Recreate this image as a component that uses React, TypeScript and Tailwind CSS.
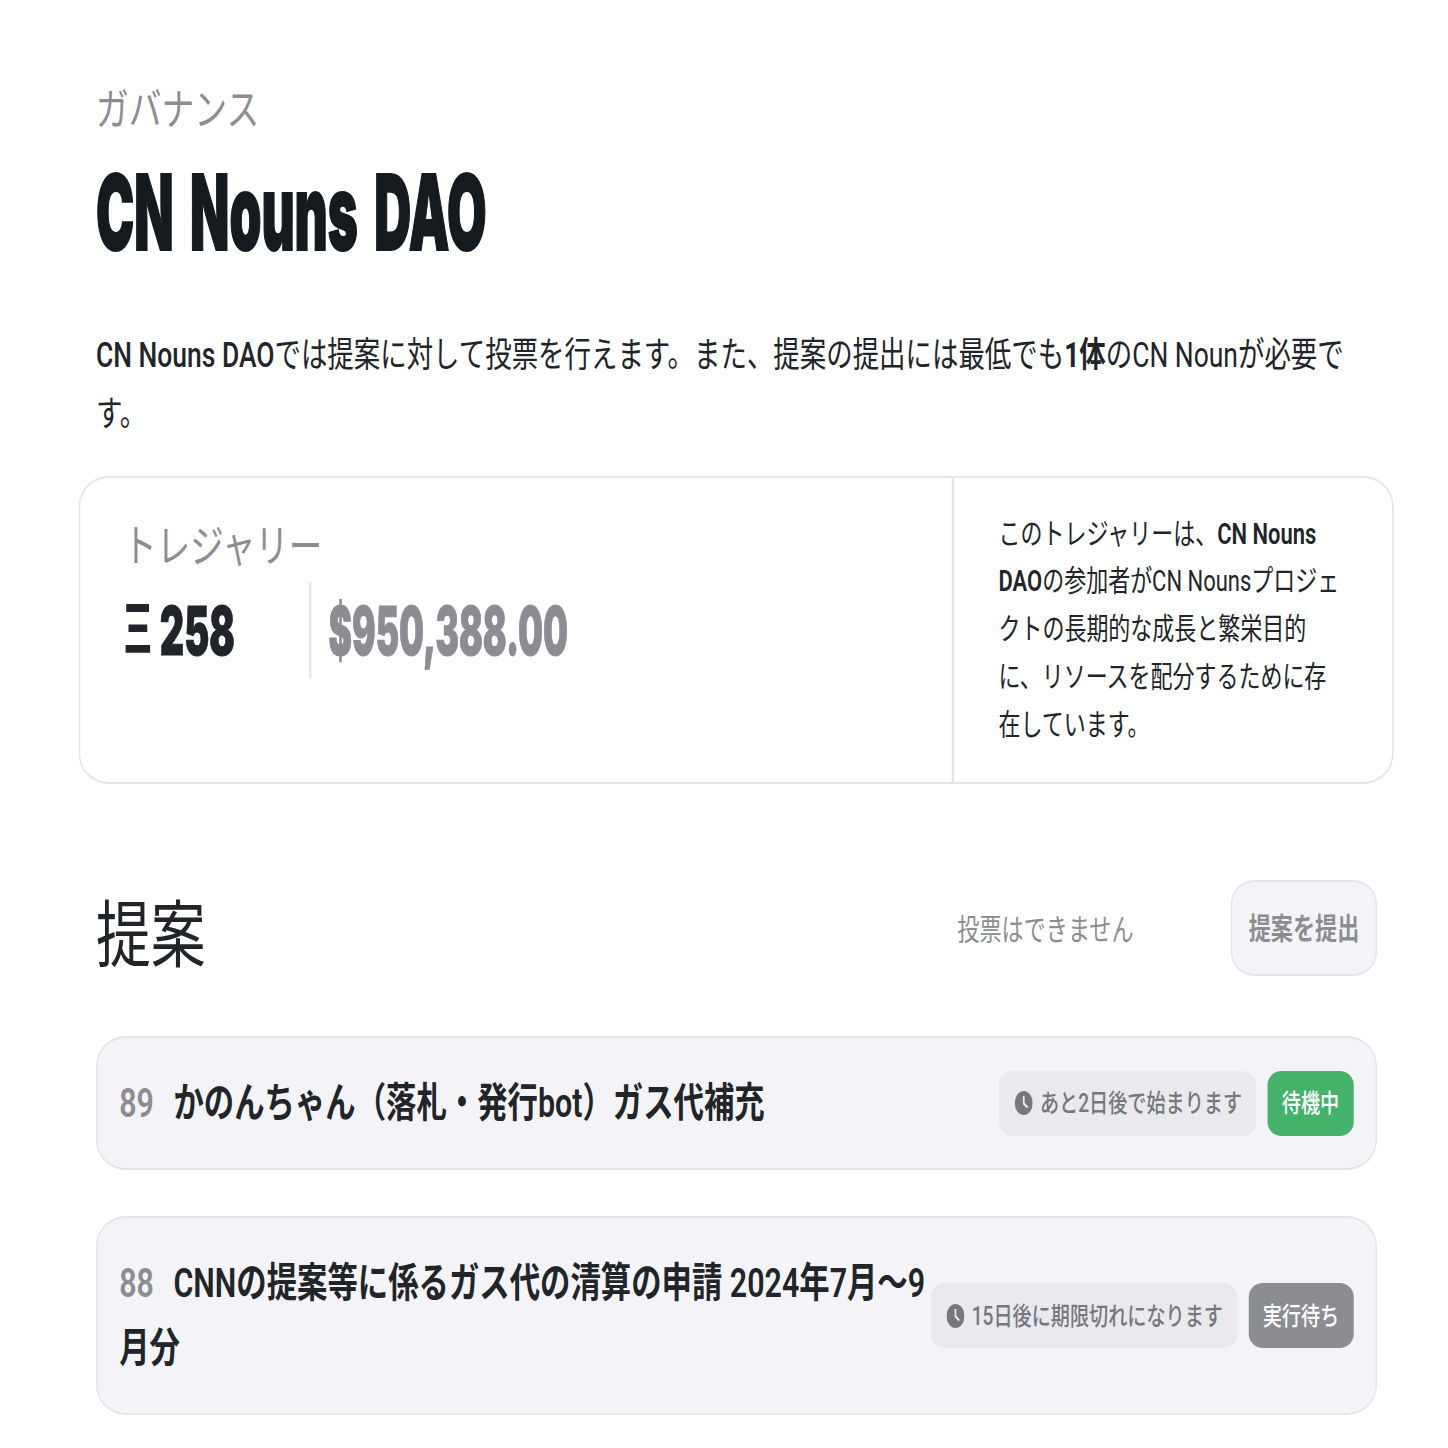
const FONT = "font-['Roboto','Noto_Sans_CJK_JP',sans-serif]";

function ClockIcon() {
  return (
    <svg viewBox="0 0 24 24" className="w-6 h-6 shrink-0" aria-hidden="true">
      <circle cx="12" cy="12" r="12" fill="#77787d" />
      <path d="M12 5v7.5l5 4" fill="none" stroke="#e9e9ee" strokeWidth="2.4" />
    </svg>
  );
}

interface ProposalProps {
  id: number;
  title: string;
  time: string;
  status: string;
  statusClass: string;
}

function Proposal({ id, title, time, status, statusClass }: ProposalProps) {
  return (
    <div className="flex items-center pt-[33px] pb-[32px] pl-[29px] pr-[29.33px] bg-[#f4f4f8] border-y-2 border-x-[2.67px] border-[#e4e4ea] rounded-[40px/30px]">
      <div className="flex-1 min-w-0 text-[40.5px] leading-[65px] font-semibold text-[#212529]">
        <span className="mr-[26px] text-[#8c8d92]">{id}</span>
        {title}
      </div>
      <div className="ml-[4px] shrink-0 flex gap-[15px] text-[25.5px] font-medium">
        <div className="flex items-center gap-[9.5px] h-[65px] pl-[21px] pr-[19px] rounded-[19px/14px] bg-[#e9e9ee] text-[#77787d]">
          <ClockIcon />
          {time}
        </div>
        <div className={`flex items-center h-[65px] px-[19px] rounded-[19px/14px] text-white ${statusClass}`}>
          {status}
        </div>
      </div>
    </div>
  );
}

export default function App() {
  return (
    <div className="h-[1448px] overflow-hidden bg-white">
      <div className={`w-[1930.67px] origin-top-left scale-x-75 pt-[80px] pl-[128px] pr-[94.67px] ${FONT}`}>
        <div className="text-[43.7px] leading-[60px] text-[#8c8d92]">ガバナンス</div>
        <h1 className="mt-[7px] h-[130px] text-[105px] leading-[130px] font-['Inter'] font-black text-[#151a1f] whitespace-nowrap">
          <span className="inline-block origin-left scale-x-[0.65] [word-spacing:0.12em] [-webkit-text-stroke:2px_#151a1f]">CN Nouns DAO</span>
        </h1>
        <p className="mt-[49px] text-[35.25px] leading-[58.5px] text-[#212529]">
          <span className="font-medium">CN Nouns DAO</span>
          では提案に対して投票を行えます。また、提案の提出には最低でも
          <span className="font-bold">1体</span>
          のCN Nounが必要です。
        </p>

        <div className="mt-[33px] -ml-[22.67px] w-[1753px] flex bg-white border-y-2 border-x-[2.67px] border-[#e4e4ea] rounded-[40px/30px]">
          <div className="flex-1 pl-[57px] pt-[39px]">
            <div className="text-[44.6px] leading-[60px] text-[#8c8d92]">トレジャリー</div>
            <div className="mt-[5px] flex items-stretch h-[96px]">
              <div className="w-[248px] flex items-center gap-[19px] text-[68px] text-[#212529] whitespace-nowrap">
                <span className="inline-block w-[30px] font-bold">Ξ</span>
                <span className="inline-block origin-left scale-x-[0.74] font-['Inter'] font-black [-webkit-text-stroke:1px_#212529]">258</span>
              </div>
              <div className="w-[2.67px] bg-[#e4e4ea]" />
              <div className="pl-[23px] flex items-center text-[68px] font-['Inter'] font-black text-[#8c8d92] [-webkit-text-stroke:1px_#8c8d92]">
                <span className="inline-block origin-left scale-x-[0.69] whitespace-nowrap">$950,388.00</span>
              </div>
            </div>
          </div>
          <div className="w-[587px] border-l-[3px] border-[#e4e4ea] py-[32.5px] pl-[59px] pr-[62px] text-[29.3px] leading-[47.8px] text-[#212529]">
            このトレジャリーは、<span className="font-semibold">CN Nouns DAO</span>の参加者がCN Nounsプロジェクトの長期的な成長と繁栄目的に、リソースを配分するために存在しています。
          </div>
        </div>

        <div className="mt-[96px] flex items-center justify-between h-[96px]">
          <h2 className="text-[73px] leading-[100px] mt-[17px] text-[#212529]">提案</h2>
          <div className="flex items-center gap-[130px]">
            <span className="text-[29.5px] mt-[5px] text-[#8c8d92]">投票はできません</span>
            <div className="flex items-center h-[96px] pt-[3px] px-[21.5px] bg-[#f4f4f8] border-y-2 border-x-[2.67px] border-[#e4e4ea] rounded-[32px/24px] text-[29.5px] font-semibold text-[#8c8d92]">
              提案を提出
            </div>
          </div>
        </div>

        <div className="mt-[60px] flex flex-col gap-[46px]">
          <Proposal
            id={89}
            title="かのんちゃん（落札・発行bot）ガス代補充"
            time="あと2日後で始まります"
            status="待機中"
            statusClass="bg-[#45b26b]"
          />
          <Proposal
            id={88}
            title="CNNの提案等に係るガス代の清算の申請 2024年7月〜9月分"
            time="15日後に期限切れになります"
            status="実行待ち"
            statusClass="bg-[#8c8d92]"
          />
        </div>
      </div>
    </div>
  );
}
